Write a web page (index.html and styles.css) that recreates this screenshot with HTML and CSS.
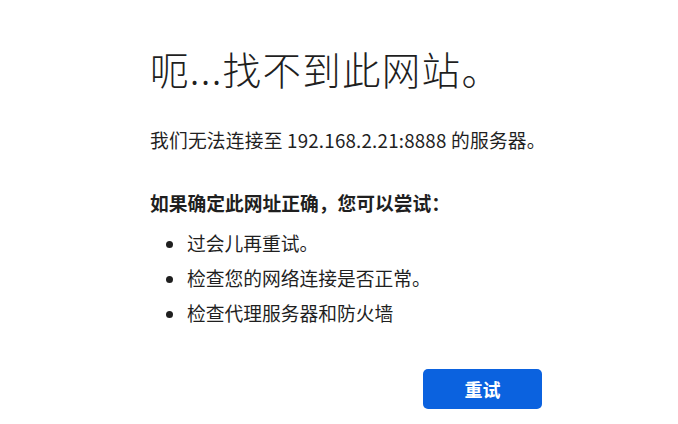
FILE: index.html
```html
<!DOCTYPE html>
<html lang="zh-CN">
<head>
<meta charset="utf-8">
<title>无法访问此网站</title>
<link rel="stylesheet" href="styles.css">
</head>
<body>
<div class="wrapper">
  <h1 class="title">呃...找不到此网站。</h1>
  <p class="message">我们无法连接至 192.168.2.21:8888 的服务器。</p>
  <p class="suggest-head">如果确定此网址正确，您可以尝试：</p>
  <ul class="suggestions">
    <li>过会儿再重试。</li>
    <li>检查您的网络连接是否正常。</li>
    <li>检查代理服务器和防火墙</li>
  </ul>
  <div class="actions">
    <button class="retry">重试</button>
  </div>
</div>
</body>
</html>
```

FILE: styles.css
```css
html, body {
  margin: 0;
  padding: 0;
  background: #ffffff;
}
body {
  font-family: "Noto Sans CJK SC", sans-serif;
  color: #1f1f1f;
  font-size: 18.75px;
}
.wrapper {
  width: 392px;
  margin-left: 150px;
  padding-top: 43px;
}
.title {
  margin: 0;
  font-size: 38.5px;
  font-weight: 300;
  line-height: 50px;
  letter-spacing: 1.3px;
  color: #1f1f1f;
  white-space: nowrap;
}
.message {
  margin: 32px 0 0;
  line-height: 30px;
  white-space: nowrap;
  letter-spacing: 0.2px;
}
.suggest-head {
  margin: 33px 0 0;
  line-height: 30px;
  font-weight: 700;
}
.suggestions {
  margin: 7px 0 0;
  padding-left: 37px;
}
.suggestions li {
  line-height: 35px;
}
.actions {
  display: flex;
  justify-content: flex-end;
  margin-top: 39px;
}
.retry {
  width: 119px;
  height: 40px;
  border: none;
  border-radius: 5px;
  background: #0b62df;
  color: #ffffff;
  font-family: "Noto Sans CJK SC", sans-serif;
  font-size: 18px;
  font-weight: 700;
  padding: 0;
}
```
